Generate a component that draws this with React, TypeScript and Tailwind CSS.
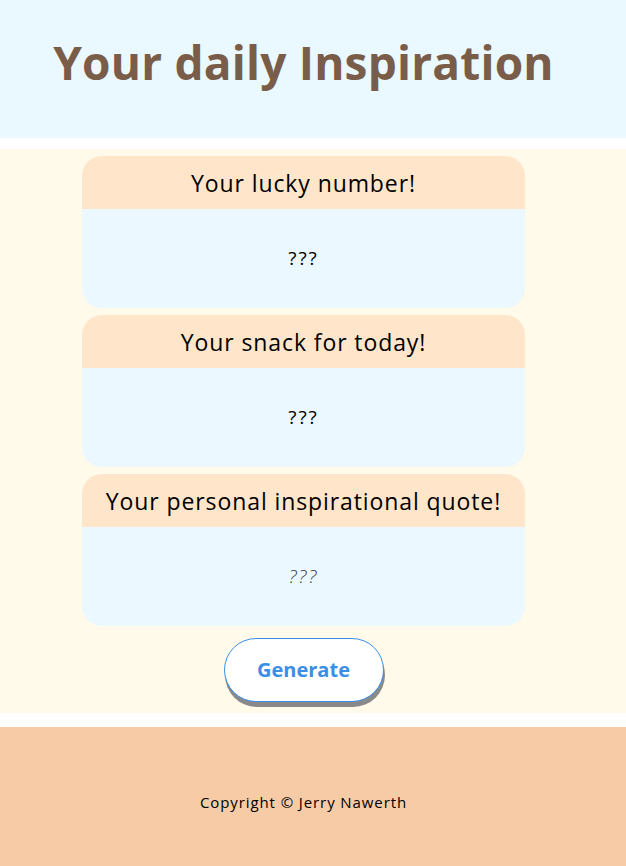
import React from "react";

const Card = ({ title, italic }: { title: string; italic?: boolean }) => (
  <div className="w-[443px] rounded-[20px] overflow-hidden">
    <div className="h-[53px] bg-[#ffe6ca] flex items-center justify-center text-[23px] tracking-[0.9px] text-black pt-[1px]">
      {title}
    </div>
    <div className="h-[99px] bg-[#ebf8ff] flex items-center justify-center">
      <span className={italic ? "italic text-[19px] tracking-[2px] text-[#333] font-light" : "text-[19px] tracking-[2px] text-black"}>???</span>
    </div>
  </div>
);

export default function App() {
  return (
    <div className="w-[626px] h-[866px] bg-white flex flex-col" style={{ fontFamily: '"Open Sans", "Noto Sans", sans-serif' }}>
      <header className="h-[138px] bg-[#eaf8ff]">
        <div className="w-[607px] h-full flex items-center justify-center">
          <h1 className="text-[46px] font-bold text-[#7a5d48] tracking-[0.2px] leading-none -mt-[14px]">
            Your daily Inspiration
          </h1>
        </div>
      </header>
      <main className="mt-[11px] h-[564px] bg-[#fffaea]">
        <div className="w-[607px] flex flex-col items-center pt-[7px] gap-[7px]">
          <Card title="Your lucky number!" />
          <Card title="Your snack for today!" />
          <Card title="Your personal inspirational quote!" italic />
          <button className="mt-[5px] w-[160px] h-[64px] rounded-[32px] border border-[#3a8ee6] bg-white text-[#3a8ee6] text-[20px] font-bold shadow-[1px_5px_0_#8a8a8a]">
            Generate
          </button>
        </div>
      </main>
      <footer className="mt-[14px] flex-1 bg-[#f8cba7]">
        <div className="w-[607px] h-full flex items-center justify-center">
          <span className="text-[15px] tracking-[0.9px] text-black mt-[12px]">Copyright © Jerry Nawerth</span>
        </div>
      </footer>
    </div>
  );
}
